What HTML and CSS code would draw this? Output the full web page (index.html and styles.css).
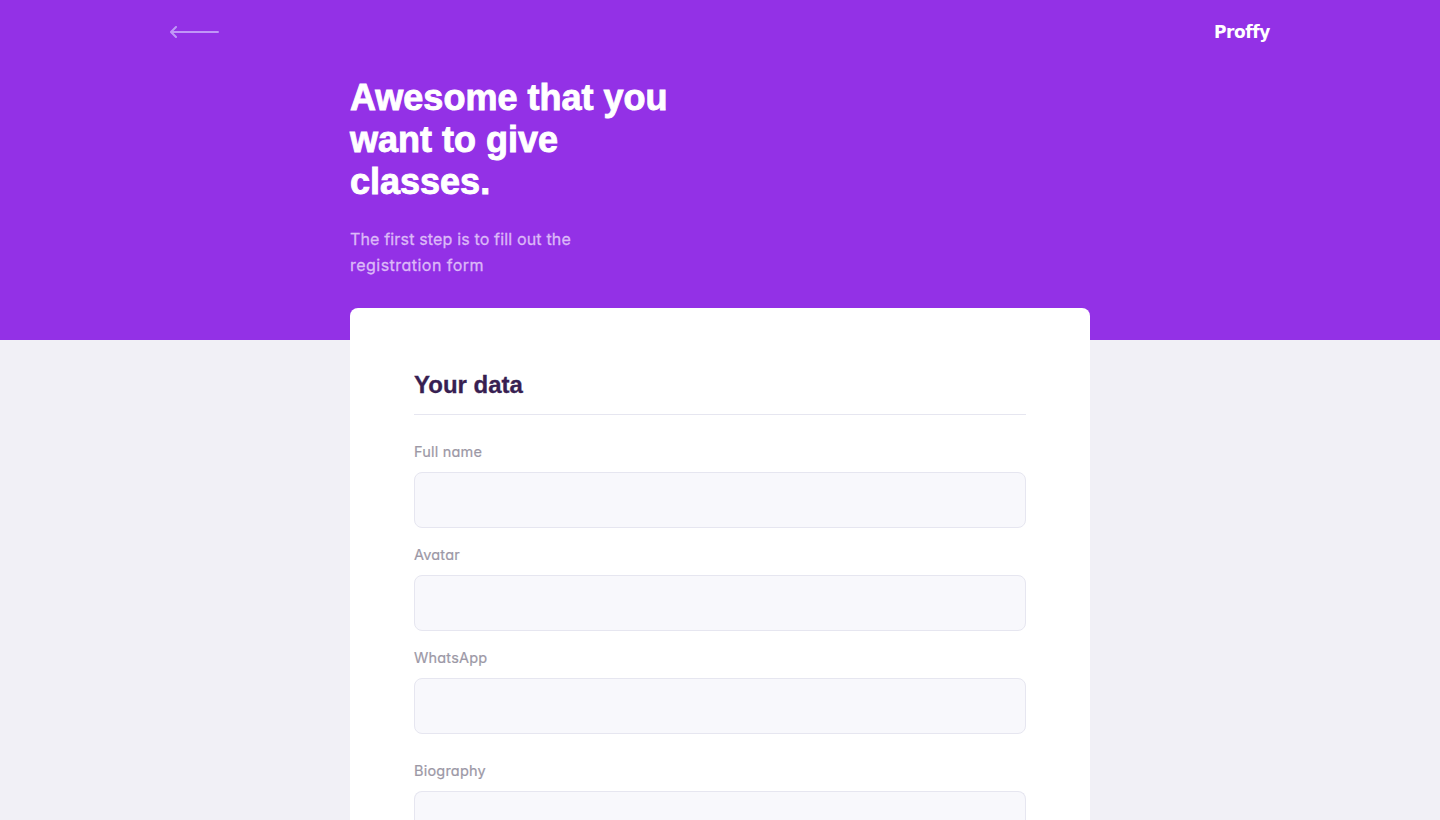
FILE: index.html
```html
<!DOCTYPE html>
<html lang="en">
<head>
<meta charset="utf-8">
<title>Proffy</title>
<link rel="stylesheet" href="styles.css">
</head>
<body>
<header class="page-header">
  <div class="top-bar">
    <a class="back" href="#" aria-label="Back"><svg width="50" height="14" viewBox="0 0 50 14" fill="none" stroke="currentColor" stroke-width="2" stroke-linecap="round" stroke-linejoin="round"><path d="M48 7H1.500M6 2L1 7l5 5"/></svg></a>
    <span class="logo">Proffy</span>
  </div>
  <div class="intro">
    <h1>Awesome that you want to give classes.</h1>
    <p>The first step is to fill out the <span class="line-end">registration form</span></p>
  </div>
</header>
<main class="card">
  <form>
    <h2>Your data</h2>
    <div class="field"><label for="name">Full name</label><input id="name"></div>
    <div class="field"><label for="avatar">Avatar</label><input id="avatar"></div>
    <div class="field"><label for="whatsapp">WhatsApp</label><input id="whatsapp"></div>
    <div class="field bio"><label for="bio">Biography</label><textarea id="bio"></textarea></div>
  </form>
</main>
</body>
</html>
```

FILE: styles.css
```css
* { box-sizing: border-box; margin: 0; padding: 0; }
html, body { height: 100%; }
body { background: #f1f0f6; overflow: hidden; font-family: Inter, sans-serif; font-feature-settings: "cv11"; }
.page-header { height: 340px; background: #9331e6; }
.top-bar { width: 1100px; height: 64px; margin: 0 auto; display: flex; align-items: center; justify-content: space-between; }
.back { display: flex; color: #d4c2ff; opacity: .7; }
.logo { color: #fff; font: bold 17px/20px "DejaVu Sans", sans-serif; letter-spacing: -.4px; padding-bottom: 1px; font-variant-ligatures: none; }
.intro { width: 740px; margin: 0 auto; padding-top: 13px; }
h1 { width: 330px; color: #fff; font: bold 36px/42px "Liberation Sans", sans-serif; -webkit-text-stroke: .9px #fff; }
.intro p { width: 240px; margin-top: 23px; color: #dcb9f8; font-size: 16px; line-height: 26px; letter-spacing: .16px; -webkit-text-stroke: .3px #dcb9f8; }
.intro .line-end { letter-spacing: .47px; white-space: nowrap; }
.card { width: 740px; height: 512px; margin: -32px auto 0; padding: 64px 64px 0; background: #fff; border-radius: 8px 8px 0 0; }
h2 { height: 43px; border-bottom: 1px solid #e6e6f0; color: #381f52; font: bold 24px/26px "Liberation Sans", sans-serif; margin-bottom: 24px; -webkit-text-stroke: .3px #381f52; }
.field { margin-bottom: 14px; }
.field label { display: block; height: 33px; color: #9c98a6; font-size: 14.500px; line-height: 26px; letter-spacing: .2px; -webkit-text-stroke: .2px #9c98a6; }
.field input, .field textarea { display: block; width: 100%; height: 56px; background: #f8f8fc; border: 1px solid #e6e6f0; border-radius: 8px; outline: 0; resize: none; }
.field.bio { margin: 24px 0 0; }
.field.bio textarea { height: 29px; border-bottom: 0; border-radius: 8px 8px 0 0; }
```
